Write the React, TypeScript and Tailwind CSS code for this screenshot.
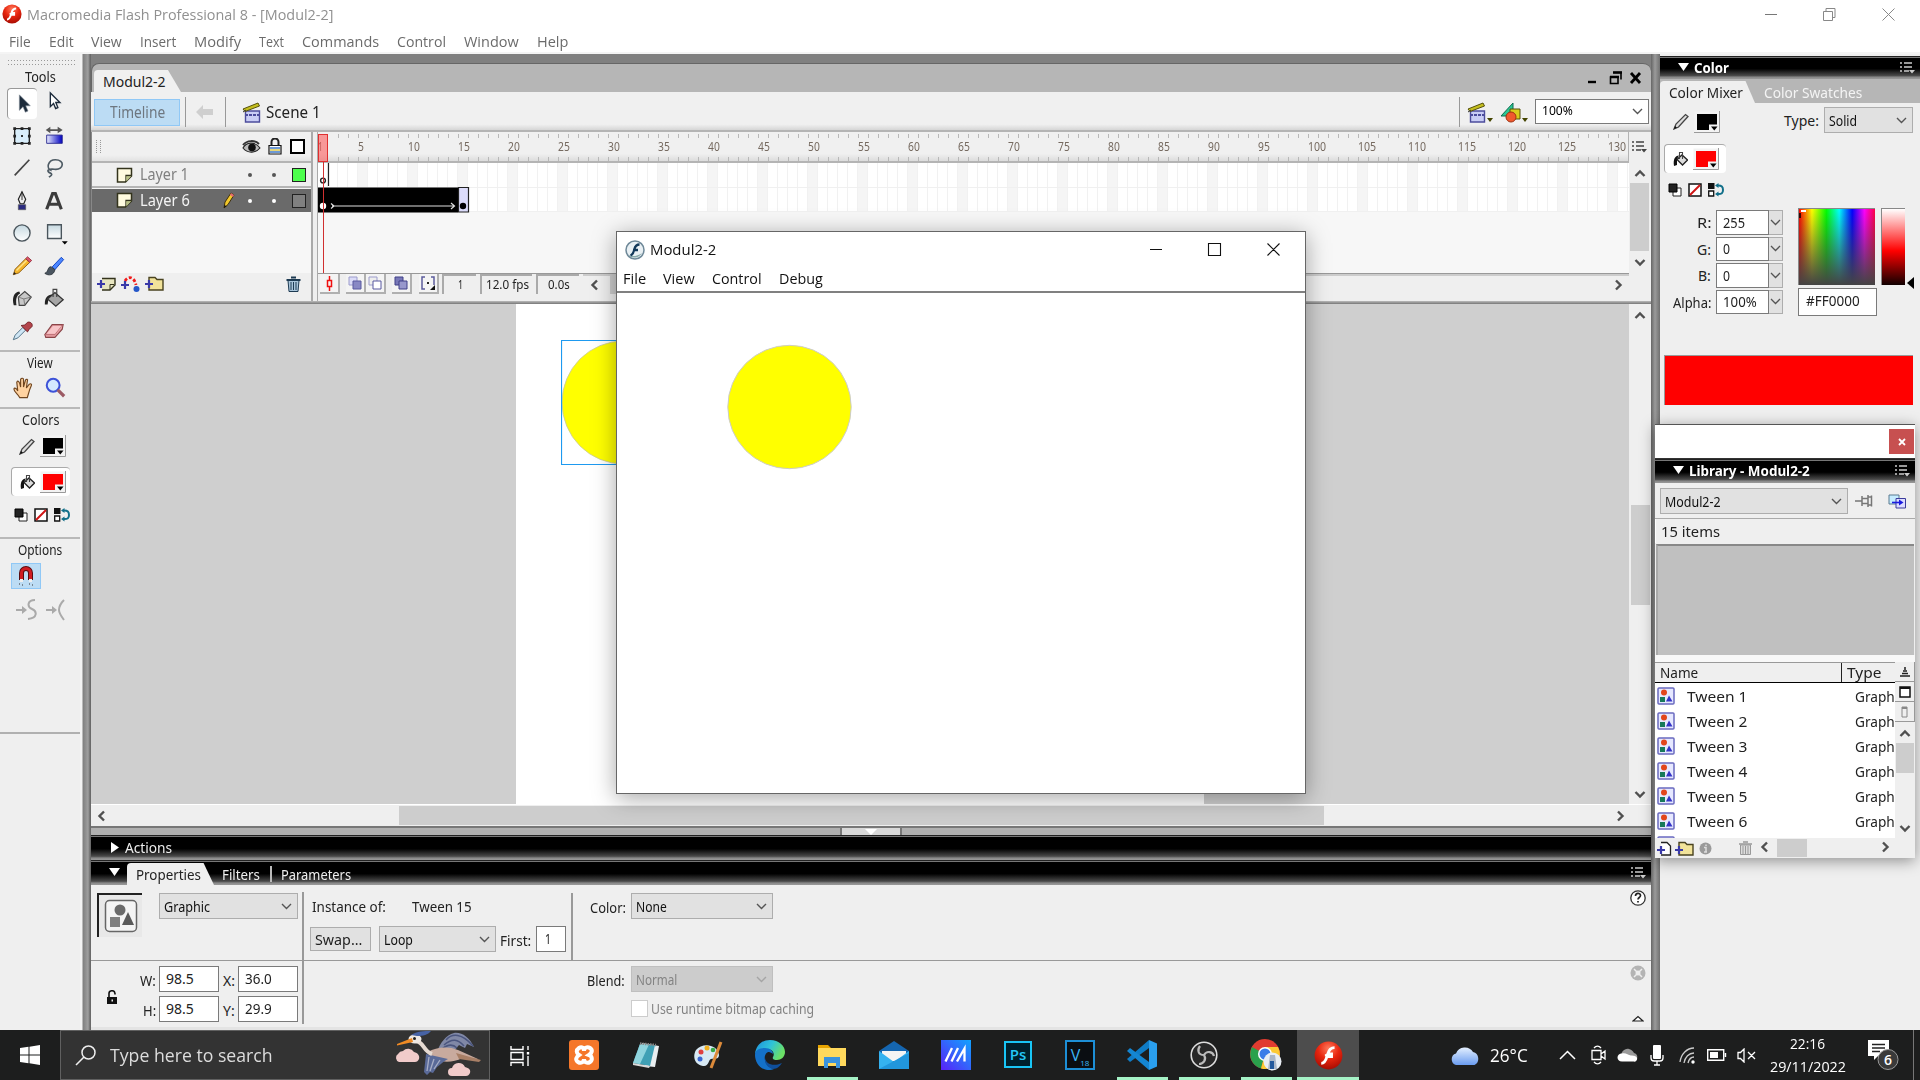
import React, { useLayoutEffect, useRef, useState } from "react";

const tahoma = "font-['Noto_Sans',sans-serif]";
const segoe = "font-['Open_Sans',sans-serif]";

/* One line of text squeezed or stretched to a given width. */
function Fit({ w, className = "", children }: { w: number; className?: string; children: React.ReactNode }) {
  const ref = useRef<HTMLSpanElement>(null);
  const [scale, setScale] = useState(1);
  useLayoutEffect(() => {
    if (ref.current) setScale(w / ref.current.offsetWidth);
  }, [w]);
  return (
    <span className={`block shrink-0 ${className}`} style={{ width: w }}>
      <span ref={ref} className="inline-block origin-left whitespace-nowrap" style={{ transform: `scaleX(${scale})` }}>
        {children}
      </span>
    </span>
  );
}

function Svg({ w, h, vb, className = "", children }: { w: number; h: number; vb?: string; className?: string; children: React.ReactNode }) {
  return (
    <svg width={w} height={h} viewBox={vb ?? `0 0 ${w} ${h}`} fill="none" className={`block shrink-0 ${className}`}>
      {children}
    </svg>
  );
}

function Chevron({ dir, className = "", stroke = "#505050" }: { dir: "up" | "down" | "left" | "right"; className?: string; stroke?: string }) {
  const d = { up: "M1.5 8L6 3.5L10.5 8", down: "M1.5 4L6 8.5L10.5 4", left: "M8 1.5L3.5 6L8 10.5", right: "M4 1.5L8.5 6L4 10.5" }[dir];
  return (
    <Svg w={12} h={12} className={className}>
      <path d={d} stroke={stroke} strokeWidth="2.4" />
    </Svg>
  );
}

function Select({ className, text, tw, disabled = false, white = false }: { className: string; text: string; tw: number; disabled?: boolean; white?: boolean }) {
  const tone = disabled ? "bg-[#cccccc] border-[#bfbfbf] text-[#838383]" : white ? "bg-white border-[#7a7a7a] text-black" : "bg-[#e1e1e1] border-[#adadad] text-[#111]";
  return (
    <div className={`flex shrink-0 items-center justify-between border pr-[5px] pl-[4px] ${tone} ${className}`}>
      <Fit w={tw}>{text}</Fit>
      <Svg w={11} h={7}>
        <path d="M1 1L5.500 5.500L10 1" stroke={disabled ? "#a5a5a5" : "#555"} strokeWidth="1.4" />
      </Svg>
    </div>
  );
}

function Field({ className, text, tw }: { className: string; text: string; tw: number }) {
  return (
    <div className={`flex shrink-0 items-center border border-[#7a7a7a] bg-white pb-[1px] pl-[6px] text-[#222] ${className}`}>
      <Fit w={tw}>{text}</Fit>
    </div>
  );
}

function PanelMenu({ stroke = "#ccc", className = "" }: { stroke?: string; className?: string }) {
  return (
    <Svg w={15} h={13} className={className}>
      <path d="M0 2h2M4 2h8M0 6h2M4 6h8M0 10h2M4 10h5" stroke={stroke} strokeWidth="1.6" />
      <path d="M9 9h6l-3 3.500z" fill={stroke} />
    </Svg>
  );
}

function FlashLogo({ size }: { size: number }) {
  return (
    <Svg w={size} h={size} vb="0 0 24 24">
      <defs>
        <radialGradient id="flashRed" cx="50%" cy="25%" r="75%">
          <stop offset="0" stopColor="#ff7a5c" />
          <stop offset="0.5" stopColor="#e8260f" />
          <stop offset="1" stopColor="#a80c02" />
        </radialGradient>
      </defs>
      <circle cx="12" cy="12" r="11.5" fill="url(#flashRed)" />
      <path d="M17 5.500c-3.500 0-4.700 2-5.600 5.200h3.100v2.200h-3.800c-1 3.500-2.200 5.600-4.700 5.600" stroke="#fff" strokeWidth="2.400" />
      <path d="M9 11.800h6" stroke="#fff" strokeWidth="1.800" />
    </Svg>
  );
}

function TitleBar() {
  return (
    <div className={`flex h-[30px] shrink-0 items-center bg-white pb-[2px] pl-[2px] text-[15px] text-[#909090] ${segoe}`}>
      <FlashLogo size={20} />
      <Fit w={306} className="ml-[5px]">Macromedia Flash Professional 8 - [Modul2-2]</Fit>
      <Svg w={12} h={12} className="ml-[1432px]"><path d="M0 6.500h12" stroke="#777" /></Svg>
      <Svg w={13} h={13} className="ml-[46px]"><path d="M.5 3.500h9v9h-9zM3 3.500v-3h9v9h-2.500" stroke="#888" /></Svg>
      <Svg w={13} h={13} className="ml-[46px]"><path d="M.5.500l12 12M12.500.500l-12 12" stroke="#888" /></Svg>
    </div>
  );
}

const menus: [string, number, number][] = [
  ["File", 22, 9], ["Edit", 25, 18], ["View", 31, 17], ["Insert", 36, 18], ["Modify", 47, 18],
  ["Text", 25, 18], ["Commands", 77, 18], ["Control", 49, 18], ["Window", 55, 18], ["Help", 31, 18],
];

function MenuBar() {
  return (
    <div className={`flex h-[24px] shrink-0 items-center border-b-2 border-[#f4f4f4] bg-white text-[15px] text-[#6b6b6b] ${segoe}`}>
      {menus.map(([m, w, gap]) => (
        <div key={m} className="shrink-0" style={{ marginLeft: gap }}><Fit w={w}>{m}</Fit></div>
      ))}
    </div>
  );
}

/* ---------- Tools ---------- */

const toolIcons: React.ReactNode[] = [
  <path d="M8 2v17l4-4 2.500 6 3-1.300L15 14h5z" fill="#1e2c3c" stroke="#8a95a0" strokeWidth=".6" />,
  <path d="M8 1v15l3.500-3.500 2.300 5.500 2.400-1L14 11.500h4.500z" fill="#fff" stroke="#1e2c3c" strokeWidth="1.500" />,
  <>
    <path d="M4 4h16v16H4z" fill="#d9eefb" stroke="#222" strokeWidth="1.500" />
    <path d="M2.500 2.500h3v3h-3zM10.500 2.500h3v3h-3zM18.500 2.500h3v3h-3zM2.500 10.500h3v3h-3zM18.500 10.500h3v3h-3zM2.500 18.500h3v3h-3zM10.500 18.500h3v3h-3zM18.500 18.500h3v3h-3zM11 11h2v2h-2z" fill="#222" />
  </>,
  <>
    <defs><linearGradient id="gt"><stop offset="0" stopColor="#e8ecff" /><stop offset="1" stopColor="#0000c0" /></linearGradient></defs>
    <path d="M4 11h17v9H4z" fill="url(#gt)" stroke="#2b2b90" />
    <path d="M3 5.500l5-3.500v2.500h8V2L21.500 5.500 16 9V6.500H8V9z" fill="#555" />
  </>,
  <path d="M4 20L20 3" stroke="#444" strokeWidth="1.800" />,
  <path d="M9.500 15c-7-2-4-12 4-12 11 0 9 11 0 10.500-4-.5-6-1-8 1-1 3 4 2.500 4 4.500 0 1.500-2 2-3 3" stroke="#4d5a63" strokeWidth="1.800" />,
  <>
    <path d="M12 2l-4 8 2 5h4l2-5z" fill="#eee" stroke="#222" strokeWidth="1.300" />
    <path d="M12 2v9" stroke="#222" /><path d="M8 16h8v5.500H8z" fill="#2b2b80" stroke="#555" strokeWidth=".7" />
  </>,
  <path d="M4 21L10.500 4h3L20 21M7 15.500h10" stroke="#3c3c3c" strokeWidth="3.400" />,
  <>
    <defs><linearGradient id="ov" x2="0" y2="1"><stop offset="0" stopColor="#c5d8e0" /><stop offset="1" stopColor="#fff" /></linearGradient></defs>
    <circle cx="12" cy="12" r="8.800" fill="url(#ov)" stroke="#4a555c" strokeWidth="1.500" />
  </>,
  <>
    <path d="M5 3h15v15H5z" fill="url(#ov)" stroke="#4a555c" strokeWidth="1.500" />
    <path d="M20.500 21h6.500l-3.200 3.500z" fill="#000" />
  </>,
  <>
    <path d="M2.500 21.500l2-6L16 4l4.500 4L8.500 19.500z" fill="#f5b52a" stroke="#8a5a12" />
    <path d="M16 4l2-2 4.500 4-2 2z" fill="#e0566a" stroke="#93303e" />
    <path d="M2.500 21.500l1-3 2 2z" fill="#222" /><path d="M6 17L17 6" stroke="#fde38b" strokeWidth="1.500" />
  </>,
  <>
    <path d="M10 13L20 2.500l2.500 2.500L13 16z" fill="#4b86ff" stroke="#0a3cc0" />
    <path d="M9 13c-4-1-3 6-7 7 4 3 10 2 11-4z" fill="#4a5560" stroke="#2c333a" />
  </>,
  <>
    <path d="M3 20c-2-8 0-14 6-15l1 2c-4 2-5 6-4 13z" fill="#222" />
    <path d="M8 11l7-6 7 6-7 9H9z" fill="#c8c8c8" stroke="#444" strokeWidth="1.300" /><path d="M8 11l6 2 1 7M14 13l8-2" stroke="#777" />
  </>,
  <>
    <path d="M2 19c0-8 3-10 8-11l-4 5-1 6z" fill="#222" />
    <path d="M5 13l8-7 9 8-8 7z" fill="#a5a5a5" stroke="#333" strokeWidth="1.400" /><path d="M11 11V2.500h4V11" stroke="#444" strokeWidth="1.300" />
  </>,
  <>
    <path d="M2.500 21.500l2-5L13 8l3 3-8.500 8.500z" fill="#cfe6f5" stroke="#4a6b80" />
    <path d="M11 6l7 7 1.500-2.500L23 7c1-3-2-5.500-5-4.500L15 5.500z" fill="#b3454c" stroke="#6d2227" />
  </>,
  <>
    <path d="M2 16L10 5h12l-1 5-8 9H3z" fill="#e9a1a5" stroke="#8a4448" strokeWidth="1.200" />
    <path d="M2 16h11l8-11" stroke="#b86a6e" /><path d="M4 15L11 6.500h9L13 15z" fill="#f7c5c8" />
  </>,
];

function Swatch({ color }: { color: "black" | "red" }) {
  return (
    <Svg w={26} h={22}>
      <path d="M.5.500h25v21H.5z" fill="#f3f3f3" />
      <path d="M25.500 0v21.500H0" stroke="#9a9a9a" />
      <path d="M3 3h20v16H3z" fill={color === "red" ? "#ff0000" : "#000"} />
      <path d="M15 13.500h10v7.500h-10z" fill="#f3f3f3" />
      <path d="M17 15.500h6.500l-3.200 4z" fill="#000" />
    </Svg>
  );
}

function MiniPencil() {
  return (
    <Svg w={16} h={17}>
      <path d="M1 16l2-5L12.500 1.500l2.500 2L5.500 14z" fill="#ddd" stroke="#444" strokeWidth="1.300" />
      <path d="M1 16l1-3 2 1.500z" fill="#111" />
    </Svg>
  );
}

function MiniBucket() {
  return (
    <Svg w={15} h={16}>
      <path d="M1 15C0 8 2 5 6 4.500L4 8v6z" fill="#111" />
      <path d="M4 8.500l5-4.500 5.500 5-5 5z" fill="#ddd" stroke="#222" strokeWidth="1.300" />
      <path d="M6.500 8V1.500h3V8" stroke="#444" strokeWidth="1.100" />
    </Svg>
  );
}

function SwatchActions({ className }: { className: string }) {
  return (
    <div className={`flex items-center ${className}`}>
      <Svg w={14} h={14}><path d="M5 5h8v8H5z" fill="#fff" stroke="#222" /><path d="M1 1h8v8H1z" fill="#222" stroke="#000" /></Svg>
      <Svg w={14} h={14}><path d="M1 1h12v12H1z" fill="#fff" stroke="#111" strokeWidth="1.500" /><path d="M2 12L12 2" stroke="#d01515" strokeWidth="2" /></Svg>
      <Svg w={16} h={14}>
        <path d="M0 0h6.500v6H0z" fill="#111" /><path d="M.7 8h5v5h-5z" fill="#fff" stroke="#111" strokeWidth="1.300" />
        <path d="M9 2.500c5-.5 6 1.500 6 4.500s-1 4.500-6 4" stroke="#12708a" strokeWidth="2" /><path d="M7 2.500L10.500 0v5zM7 11l3.500-2.500v5z" fill="#12708a" />
      </Svg>
    </div>
  );
}

function SectionLabel({ text, w, className }: { text: string; w: number; className: string }) {
  return <div className={`flex h-[20px] items-center justify-center ${className}`}><Fit w={w}>{text}</Fit></div>;
}

function Tools() {
  return (
    <div className={`flex w-[80px] shrink-0 flex-col bg-[#efefef] text-[13.500px] text-[#222] ${tahoma}`}>
      <div className="mt-[6px] ml-[8px] h-[6px] w-[68px] bg-[repeating-linear-gradient(90deg,#999_0_1px,transparent_1px_3px)] [mask-image:linear-gradient(#000_0_1px,transparent_1px_4px,#000_4px_5px,transparent_5px)]" />
      <SectionLabel text="Tools" w={31} className="mt-[1px]" />
      <div className="ml-[6px] grid h-[260px] w-[64px] grid-cols-2 grid-rows-8">
        {toolIcons.map((icon, i) => (
          <div key={i} className={`flex items-center justify-center ${i === 0 ? "m-px rounded border-t border-l border-[#999] bg-white" : ""}`}>
            <Svg w={22} h={22} vb="0 0 24 24" className="overflow-visible">{icon}</Svg>
          </div>
        ))}
      </div>
      <div className="mt-[3px] h-[2px] bg-[#b9b9b9]" />
      <SectionLabel text="View" w={26} className="mt-[1px]" />
      <div className="ml-[7px] grid h-[29px] w-[64px] grid-cols-2 place-items-center">
        <Svg w={23} h={24} vb="0 0 24 24">
          <path d="M8 22c-2-4-6-6-6-9 1-2 3 0 4 2L5 6c1-2 2-1 3 1l1 4V3c1-2 3-1 3 0v8l2-7c1-2 3-1 2 1l-1 7 3-4c2-1 3 0 2 2-2 4-3 9-4 12z" fill="#ffd2a0" stroke="#70451e" strokeWidth="1.200" />
        </Svg>
        <Svg w={22} h={22} vb="0 0 24 24">
          <circle cx="10" cy="9" r="7" fill="#d5eaff" stroke="#3d52d8" strokeWidth="2.200" /><path d="M15 14l7 7" stroke="#9c5a64" strokeWidth="3.500" />
        </Svg>
      </div>
      <div className="mt-[5px] h-[2px] bg-[#b9b9b9]" />
      <SectionLabel text="Colors" w={37} className="mt-[1px]" />
      <div className="mt-[4px] flex h-[24px] items-center gap-[5px] pl-[19px]"><MiniPencil /><Swatch color="black" /></div>
      <div className="mt-[9px] ml-[11px] flex h-[29px] w-[59px] items-center gap-[5px] rounded border-t border-l border-[#aaa] bg-white pl-[8px]"><MiniBucket /><Swatch color="red" /></div>
      <SwatchActions className="mt-[12px] ml-[14px] gap-[6px]" />
      <div className="mt-[15px] h-[2px] bg-[#b9b9b9]" />
      <SectionLabel text="Options" w={44} className="mt-[1px]" />
      <div className="mt-[3px] ml-[11px] flex h-[26px] w-[30px] items-center justify-center border border-[#90c8f6] bg-[#bcdcf4]">
        <Svg w={16} h={20}>
          <path d="M3.500 14V7a4.500 4.500 0 0 1 9 0v7" stroke="#5a0d10" strokeWidth="5" /><path d="M3.500 14V7a4.500 4.500 0 0 1 9 0v7" stroke="#d01c22" strokeWidth="3" />
          <path d="M2 13h3v3H2zM11 13h3v3h-3z" fill="#eee" /><path d="M1 18h1M4 19h1M11 18h1M14 19h1" stroke="#333" />
        </Svg>
      </div>
      <div className="mt-[10px] ml-[16px] flex h-[22px] items-center gap-[9px]">
        <Svg w={21} h={22}><path d="M0 11h7M19 1c-8 0-8 7-3 9s6 9-4 10" stroke="#aaa" strokeWidth="2" /><path d="M6 7l5 4-5 4z" fill="#aaa" /></Svg>
        <Svg w={20} h={22}><path d="M0 11h7M18 1c-4 4-5 7-5 10s2 6 5 10" stroke="#aaa" strokeWidth="2" /><path d="M6 7l5 4-5 4z" fill="#aaa" /></Svg>
      </div>
      <div className="mt-[111px] h-[2px] bg-[#b0b0b0]" />
    </div>
  );
}

/* ---------- Document window ---------- */

function SceneIcon() {
  return (
    <Svg w={20} h={21}>
      <path d="M3.500 9h14v11h-14z" fill="#c9cdf5" stroke="#4c4c9c" strokeWidth="1.400" /><path d="M3 13h15" stroke="#4c4c9c" strokeWidth="2" strokeDasharray="3 1" />
      <path d="M1 7L16 1l1.500 3L3 9.500z" fill="#c5bf1e" stroke="#55510a" /><path d="M1 10l3-2" stroke="#333" />
    </Svg>
  );
}

function DocTabs() {
  return (
    <div className="flex h-[29px] shrink-0 items-end rounded-t-lg border-t border-l border-[#666] bg-[#b6b6b6]">
      <div className="ml-[2px] flex h-[22px] w-[87px] items-center rounded-tl bg-[#f0f0f0] pt-px pl-[9px] text-[14px] text-[#222] [clip-path:polygon(0_0,85%_0,100%_100%,0_100%)]">
        <Fit w={63}>Modul2-2</Fit>
      </div>
      <Svg w={56} h={14} className="mb-[7px] ml-[1406px]">
        <path d="M1 11h8" stroke="#000" strokeWidth="2.400" />
        <path d="M26.500 1.500h7.500v7M23.500 6h7.500v6.500h-7.500z" stroke="#000" strokeWidth="1.600" /><path d="M23 6h9M26 1.500h9" stroke="#000" strokeWidth="2.400" />
        <path d="M44 2l9 10M53 2l-9 10" stroke="#000" strokeWidth="2.800" />
      </Svg>
    </div>
  );
}

function EditBar() {
  return (
    <div className="flex h-[40px] shrink-0 items-center border-b-2 border-[#b4b4b4] bg-[linear-gradient(#f0f0f0_85%,#d6d6d6)] pt-[2px] text-[16px]">
      <div className="ml-[3px] flex h-[27px] w-[86px] items-center border border-[#90c8f6] bg-[#bcdcf4] pl-[15px] text-[#6e7780]"><Fit w={55}>Timeline</Fit></div>
      <div className="ml-[5px] h-[30px] w-px bg-[#999]" />
      <Svg w={17} h={14} className="ml-[10px]"><path d="M0 7l7-7v4h10v6H7v4z" fill="#cfcfcf" /></Svg>
      <div className="ml-[12px] h-[30px] w-px bg-[#999]" />
      <div className="ml-[16px]"><SceneIcon /></div>
      <Fit w={55} className="ml-[4px] text-[#222]">Scene 1</Fit>
      <div className="ml-[1138px] h-[30px] w-px bg-[#999]" />
      <div className="ml-[7px] flex items-end">
        <SceneIcon />
        <Svg w={7} h={5}><path d="M0 0h6l-3 4z" fill="#444400" /></Svg>
        <Svg w={22} h={21} className="ml-[6px]">
          <path d="M1 14L13 1v13z" fill="#2cc795" stroke="#0d6b4f" /><path d="M10 7h10v10H10z" fill="#d8cd1c" stroke="#55510a" /><circle cx="11" cy="15" r="5" fill="#f0592e" stroke="#a03010" />
        </Svg>
        <Svg w={7} h={5}><path d="M0 0h6l-3 4z" fill="#444400" /></Svg>
      </div>
      <Select className="mb-[2px] ml-[6px] h-[25px] w-[114px] pl-[6px] text-[12.500px]" text="100%" tw={31} white />
    </div>
  );
}

function LayerIcon() {
  return <Svg w={18} h={17}><path d="M1.500 1.500h14v7.500l-6 6h-8z" fill="#fffbe0" stroke="#33331c" strokeWidth="1.500" /><path d="M15.500 8.500h-5.500V15" fill="#aab37c" stroke="#33331c" strokeWidth="1.300" /><path d="M15 9.200l-4.800 4.800V9.200z" fill="#b9c088" /></Svg>;
}

function LayerColumn() {
  return (
    <div className="flex w-[220px] shrink-0 flex-col border-l border-[#888] bg-[#f7f7f7] text-[15.500px]">
      <div className="flex h-[31px] items-center border-b-2 border-[#b4b4b4] bg-[linear-gradient(#f0f0f0_80%,#e2e2e2)]">
        <div className="ml-[4px] h-[14px] w-[6px] bg-[repeating-linear-gradient(#999_0_1px,transparent_1px_2px)] [mask-image:linear-gradient(90deg,#000_0_1px,transparent_1px_4px,#000_4px_5px,transparent_5px)]" />
        <Svg w={19} h={14} className="ml-[140px]">
          <path d="M1 8C4 2 13 1 18 8c-4 5-12 6-17 0z" fill="#bbb" stroke="#222" strokeWidth="1.100" /><circle cx="10" cy="7.500" r="3.800" fill="#111" /><path d="M1 5c4-5 12-5 16-1" stroke="#333" strokeWidth="2" />
        </Svg>
        <Svg w={14} h={17} className="ml-[7px]">
          <path d="M3.500 8V4a3.500 3.500 0 0 1 7 0v4" stroke="#222" strokeWidth="2" /><path d="M1 7.500h12v8.500H1z" fill="#fff" stroke="#111" strokeWidth="1.200" /><path d="M2 10h10M2 14h10" stroke="#3e78c8" strokeWidth="1.300" /><path d="M2 12h10" stroke="#d8c030" strokeWidth="1.300" />
        </Svg>
        <div className="ml-[8px] h-[15px] w-[15px] border-[2.500px] border-black bg-white" />
      </div>
      <div className="flex h-[23px] items-center bg-[#efefef] pt-px pl-[24px] text-[#808080]">
        <LayerIcon />
        <Fit w={49} className="ml-[6px]">Layer 1</Fit>
        <div className="ml-[59px] h-[4px] w-[4px] rounded-full bg-[#555]" />
        <div className="ml-[20px] h-[4px] w-[4px] rounded-full bg-[#555]" />
        <div className="ml-[16px] h-[14px] w-[14px] border-[1.500px] border-[#222] bg-[#4dff4d]" />
      </div>
      <div className="h-[3px] bg-[linear-gradient(#b5b5b5_66%,#f4f4f4_66%)]" />
      <div className="flex h-[23px] items-center bg-[#6a6a6a] pl-[24px] text-[#f4f4f4]">
        <LayerIcon />
        <Fit w={50} className="ml-[6px] pt-px">Layer 6</Fit>
        <Svg w={12} h={17} className="ml-[33px]"><path d="M1 16l1-6 6-9 3 2-6 9.500z" fill="#f3c92b" stroke="#40300a" /><path d="M8 1l3 2-1 2-3-2z" fill="#e26a74" /><path d="M1 16l.5-3 2 1.200z" fill="#111" /></Svg>
        <div className="ml-[13px] h-[4px] w-[4px] rounded-full bg-white" />
        <div className="ml-[20px] h-[4px] w-[4px] rounded-full bg-white" />
        <div className="ml-[16px] h-[14px] w-[14px] border-[1.500px] border-[#222] bg-[#808080]" />
      </div>
      <div className="grow" />
      <div className="flex h-[28px] items-start bg-[#efefef] pt-[3px] pl-[4px]">
        <Svg w={20} h={16}><path d="M6 2.500h13V9l-5 5H6" fill="#e8e6c0" stroke="#33331c" strokeWidth="1.400" /><path d="M18 8.500h-4V14" stroke="#33331c" /><path d="M1 8h8M5 4v8" stroke="#3a3aa8" strokeWidth="2.200" /></Svg>
        <Svg w={20} h={16} className="ml-[4px]"><path d="M5 5c3-5 9-5 11 4" stroke="#f01a1a" strokeWidth="2.800" strokeDasharray="3 2" /><path d="M1 9h8M5 5v8" stroke="#3a3aa8" strokeWidth="2.200" /><circle cx="16.500" cy="13" r="3" fill="#2457c9" /></Svg>
        <Svg w={20} h={16} className="ml-[4px]"><path d="M5 3.500V1.500h6l2 2h6V14H5z" fill="#f2e39a" stroke="#4a4320" strokeWidth="1.400" /><path d="M1 8h8M5 4v8" stroke="#3a3aa8" strokeWidth="2.200" /></Svg>
        <Svg w={15} h={16} className="ml-[122px]"><path d="M2 4.500h11L12 15.500H3z" fill="#a9c5da" stroke="#1d3a52" /><path d="M5 6v8M7.500 6v8M10 6v8" stroke="#1d3a52" /><path d="M.5 4h14M5 1.500h5" stroke="#1d3a52" strokeWidth="2" /></Svg>
      </div>
    </div>
  );
}

const frameMarks = Array.from({ length: 26 }, (_, i) => (i + 1) * 5);

function SmallBtn({ className, children }: { className: string; children: React.ReactNode }) {
  return <div className={`flex h-[20px] w-[20px] shrink-0 items-center justify-center border-r-2 border-b-2 border-[#b0b0b0] bg-[#f4f4f4] ${className}`}>{children}</div>;
}

function Frames() {
  return (
    <div className="relative flex w-[1312px] shrink-0 flex-col border-l border-[#aaa] bg-[#f7f7f7]">
      <div className="flex h-[31px] shrink-0 flex-col border-r border-b-2 border-[#b4b4b4] bg-[linear-gradient(#f0f0f0_75%,#dcdcdc)] pt-[2px]">
        <div className="ml-[20px] h-[4px] bg-[repeating-linear-gradient(90deg,#b8b8b8_0_1px,transparent_1px_10px)]" />
        <div className="flex h-[18px] items-center text-[12px] text-[#75695f]">
          <div className="w-[40px] shrink-0"><Fit w={5}>1</Fit></div>
          {frameMarks.map((n) => (
            <div key={n} className={`shrink-0 ${n === 130 ? "w-[19px]" : "w-[50px]"}`}><Fit w={n < 10 ? 6 : n < 100 ? 12 : 18.5}>{n}</Fit></div>
          ))}
        </div>
        <div className="mt-px ml-[20px] h-[4px] bg-[repeating-linear-gradient(90deg,#b8b8b8_0_1px,transparent_1px_10px)]" />
      </div>
      <div className="h-[49px] shrink-0 bg-white bg-[linear-gradient(transparent_24px,#f0f0f0_24px_25px,transparent_25px_48px,#f0f0f0_48px),repeating-linear-gradient(90deg,transparent_0_9px,#f1f1f1_9px_10px),repeating-linear-gradient(90deg,transparent_0_40px,#f5f5f5_40px_50px)]">
        <Svg w={160} h={50} className="overflow-visible">
          <circle cx="5" cy="17.500" r="2.400" fill="#fff" stroke="#222" strokeWidth="1.400" /><path d="M10.500 0v23" stroke="#222" strokeWidth="1.200" />
          <path d="M0 24.500h140v25H0z" fill="#000" /><path d="M140.500 24.500h10v24.500h-10z" fill="#dcdcfa" stroke="#222" strokeWidth="1.200" />
          <circle cx="5" cy="43" r="3.200" fill="#fff" /><circle cx="145" cy="43" r="3.200" fill="#000" />
          <path d="M14 43h122M13 40.500l3 2.500-3 2.500M133 40l3.500 3-3.500 3" stroke="#ddd" strokeWidth="1.200" />
        </Svg>
      </div>
      <div className="grow" />
      <div className="flex h-[28px] shrink-0 items-start border-t border-[#999] bg-[#efefef] text-[12.500px] text-[#222]">
        <SmallBtn className="ml-[2px]"><Svg w={7} h={15}><path d="M3.500 0v4M3.500 11v4M1.500 4.500h4v6h-4z" stroke="#f01010" strokeWidth="1.500" /></Svg></SmallBtn>
        <SmallBtn className="ml-[6px]"><Svg w={14} h={14}><path d="M1 1h8v8H1z" fill="#dcdcf8" stroke="#9c9ccc" /><path d="M5 5h8v8H5z" fill="#8888c4" stroke="#5858a0" /></Svg></SmallBtn>
        <SmallBtn className=""><Svg w={14} h={14}><path d="M1 1h8v8H1z" fill="#eee" stroke="#9c9ccc" /><path d="M5 5h8v8H5z" fill="#fff" stroke="#5858a0" /></Svg></SmallBtn>
        <SmallBtn className="ml-[6px]"><Svg w={14} h={14}><path d="M1 1h8v8H1z" fill="#7878b8" stroke="#404088" /><path d="M5 5h8v8H5z" fill="#9898cc" stroke="#404088" /></Svg></SmallBtn>
        <SmallBtn className="ml-[7px]"><Svg w={14} h={14}><path d="M4 1H1v12h3M10 1h3v8" stroke="#5c5c9c" strokeWidth="1.500" /><path d="M6 6h2v2H6z" fill="#222" /><path d="M14 9v5H9z" fill="#111" /></Svg></SmallBtn>
        <div className="ml-[3px] flex h-[20px] w-[34px] items-center justify-center border-t-2 border-l-2 border-[#aaa]"><Fit w={5}>1</Fit></div>
        <div className="ml-[4px] flex h-[20px] w-[52px] items-center justify-center border-t-2 border-l-2 border-[#aaa]"><Fit w={43}>12.0 fps</Fit></div>
        <div className="ml-[4px] flex h-[20px] w-[43px] items-center justify-center border-t-2 border-l-2 border-[#aaa]"><Fit w={22}>0.0s</Fit></div>
        <div className="ml-[4px] flex h-[20px] grow items-center border-t-2 border-[#ccc]">
          <Chevron dir="left" className="ml-[6px]" />
          <div className="ml-[9px] h-[18px] w-[600px] bg-[#cdcdcd]" />
          <Chevron dir="right" className="mr-[5px] ml-auto" />
        </div>
      </div>
      <div className="absolute top-[2px] left-0 h-[28px] w-[10px] border-[1.500px] border-[#e03030] bg-[#ff5050]/55" />
      <div className="absolute top-[30px] left-[5px] h-[111px] w-px bg-[#d03030]" />
    </div>
  );
}

function Timeline() {
  return (
    <div className="flex h-[169px] shrink-0">
      <LayerColumn />
      <div className="w-[6px] shrink-0 border-l-2 border-[#aaa] bg-[#efefef]" />
      <Frames />
      <div className="flex grow flex-col items-center bg-[#efefef]">
        <PanelMenu stroke="#444" className="mt-[8px] mr-[2px]" />
        <Chevron dir="up" className="mt-[15px] mr-[1px]" />
        <div className="mt-[3px] mr-[1px] h-[68px] w-[19px] bg-[#cdcdcd]" />
        <Chevron dir="down" className="mt-[5px] mr-[1px]" />
      </div>
    </div>
  );
}

function Stage() {
  return (
    <>
      <div className="flex h-[500px] shrink-0">
        <div className="flex w-[1538px] shrink-0 overflow-hidden bg-[#cfcfcf]">
          <div className="ml-[425px] w-[688px] bg-white pt-[36px] pl-[45px]">
            <Svg w={126} h={126}>
              <circle cx="62.500" cy="62.500" r="61.500" fill="#ff0" stroke="#c8c8a0" strokeWidth=".8" /><path d="M.5.500h124.500v124H.5z" stroke="#1e9af0" strokeWidth="1.200" />
            </Svg>
          </div>
        </div>
        <div className="flex grow flex-col items-center bg-[#efefef]">
          <Chevron dir="up" className="mt-[6px]" />
          <div className="mt-[183px] h-[100px] w-[19px] bg-[#cdcdcd]" />
          <Chevron dir="down" className="mt-auto mb-[4px]" />
        </div>
      </div>
      <div className="flex h-[24px] shrink-0 items-center border-t border-b-2 border-t-white border-b-[#777] bg-[#efefef]">
        <Chevron dir="left" className="ml-[5px]" />
        <div className="ml-[291px] h-[19px] w-[925px] bg-[#cdcdcd]" />
        <Chevron dir="right" className="ml-[290px]" />
      </div>
    </>
  );
}

const barTone = "bg-[linear-gradient(#222_0_1px,#777_1px_2px,#000_2px_55%,#4a4a4a_85%,#888_92%,#9a9a9a)]";

function Properties() {
  return (
    <div className="flex h-[142px] shrink-0 bg-[#efefef] text-[14px] text-[#222]">
      <div className="flex w-[211px] shrink-0 flex-col">
        <div className="flex h-[76px] items-start border-b border-[#999] pt-[8px] pl-[6px]">
          <div className="flex h-[44px] w-[45px] items-center justify-center border-t-2 border-l-2 border-[#222] bg-[#e8e8e8]">
            <Svg w={34} h={34}>
              <rect x="1.500" y="1.500" width="31" height="31" rx="4" fill="#f4f4f4" stroke="#666" strokeWidth="1.500" /><circle cx="16" cy="11" r="5.500" fill="#6a6a6a" />
              <path d="M6 18h10v10H6z" fill="#808080" /><path d="M18 26l6-13 6 13z" fill="#5a5a5a" />
            </Svg>
          </div>
          <Select className="ml-[17px] h-[26px] w-[139px]" text="Graphic" tw={46} />
        </div>
        <div className="flex pt-[5px] pl-[15px]">
          <Svg w={12} h={15} className="mt-[24px]"><path d="M3 7V4a3 3 0 0 1 6-.5v1" stroke="#111" strokeWidth="1.600" /><path d="M1 7h10v7H1z" fill="#111" /><path d="M5.500 9.500h1.500v2H5.500z" fill="#eee" /></Svg>
          <div className="ml-[22px] grid grid-cols-[19px_60px_19px_61px] grid-rows-[26px_26px] gap-y-[4px]">
            <Fit w={16} className="self-center pt-[3px]">W:</Fit><Field className="h-[26px] w-[60px]" text="98.5" tw={28} />
            <Fit w={12} className="ml-[4px] self-center pt-[3px]">X:</Fit><Field className="h-[26px] w-[60px]" text="36.0" tw={27} />
            <Fit w={13} className="ml-[3px] self-center pt-[3px]">H:</Fit><Field className="h-[26px] w-[60px]" text="98.5" tw={28} />
            <Fit w={12} className="ml-[4px] self-center pt-[3px]">Y:</Fit><Field className="h-[26px] w-[60px]" text="29.9" tw={27} />
          </div>
        </div>
      </div>
      <div className="mt-[7px] h-[132px] w-[2px] shrink-0 bg-[#999]" />
      <div className="flex grow flex-col">
        <div className="flex h-[76px] shrink-0 border-b border-[#999]">
          <div className="w-[267px] shrink-0 pl-[6px]">
            <div className="flex h-[41px] items-center pt-[2px] pl-[2px]"><Fit w={74}>Instance of:</Fit><Fit w={60} className="ml-[26px]">Tween 15</Fit></div>
            <div className="flex h-[26px] items-center">
              <div className="flex h-[24px] w-[61px] shrink-0 items-center border border-[#adadad] bg-[#e1e1e1] pl-[4px]"><Fit w={47}>Swap...</Fit></div>
              <Select className="ml-[8px] h-[26px] w-[117px]" text="Loop" tw={29} />
              <Fit w={31} className="ml-[4px] pt-[3px]">First:</Fit>
              <Field className="ml-[5px] h-[26px] w-[30px] pl-[8px]" text="1" tw={6} />
            </div>
          </div>
          <div className="mt-[8px] w-[2px] shrink-0 bg-[#999]" />
          <div className="flex items-start pt-[8px] pl-[17px]"><Fit w={36} className="pt-[4px]">Color:</Fit><Select className="ml-[5px] h-[26px] w-[142px]" text="None" tw={31} /></div>
          <div className="mt-[5px] mr-[5px] ml-auto">
            <Svg w={16} h={16}><circle cx="8" cy="8" r="7.200" fill="#fff" stroke="#333" strokeWidth="1.300" /><path d="M5.500 6c0-3.500 5-3.500 5-.500 0 2-2.500 2-2.500 4M8 11v1.500" stroke="#222" strokeWidth="1.700" /></Svg>
          </div>
        </div>
        <div className="flex">
          <div className="pt-[5px] pl-[283px]">
            <div className="flex"><Fit w={38} className="pt-[4px]">Blend:</Fit><Select className="ml-[6px] h-[26px] w-[142px]" text="Normal" tw={41} disabled /></div>
            <div className="mt-[6px] ml-[44px] flex items-center text-[#838383]"><div className="h-[17px] w-[17px] border border-[#ccc] bg-white" /><Fit w={163} className="ml-[3px]">Use runtime bitmap caching</Fit></div>
          </div>
          <div className="mr-[5px] ml-auto flex flex-col items-center gap-[34px] pt-[4px]">
            <Svg w={16} h={16}><circle cx="8" cy="8" r="7.500" fill="#b4b4b4" /><circle cx="8" cy="8" r="2.500" fill="#eee" /><path d="M4 4l8 8M12 4l-8 8" stroke="#eee" strokeWidth="1.500" /></Svg>
            <Svg w={12} h={7}><path d="M1 6l5-4.500L11 6z" fill="#fff" stroke="#222" strokeWidth="1.200" /></Svg>
          </div>
        </div>
      </div>
    </div>
  );
}

function Center() {
  return (
    <div className={`flex w-[1560px] shrink-0 flex-col bg-[#808080] pt-[9px] ${tahoma}`}>
      <DocTabs />
      <EditBar />
      <Timeline />
      <div className="h-[3px] shrink-0 bg-[linear-gradient(#bbb,#777)]" />
      <Stage />
      <div className="flex h-[7px] shrink-0 justify-center bg-[#b0b0b0]">
        <div className="flex w-[62px] justify-center border-x-2 border-x-[#777] bg-[#d8d8d8] pt-px"><Svg w={12} h={6}><path d="M0 0h12L6 6z" fill="#fff" /></Svg></div>
      </div>
      <div className={`flex h-[25px] shrink-0 items-center pl-[20px] text-[14px] text-[#eee] ${barTone}`}>
        <Svg w={8} h={11}><path d="M0 0l8 5.500L0 11z" fill="#fff" /></Svg>
        <Fit w={47} className="ml-[6px]">Actions</Fit>
      </div>
      <div className={`flex h-[25px] shrink-0 items-end pl-[18px] text-[14px] text-[#eee] ${barTone}`}>
        <Svg w={11} h={8} className="mb-[9px]"><path d="M0 0h11L5.500 8z" fill="#fff" /></Svg>
        <div className="ml-[7px] flex h-[22px] w-[87px] items-center rounded-tl bg-[#efefef] pl-[9px] text-[#222] [clip-path:polygon(0_0,88%_0,100%_100%,0_100%)]"><Fit w={65}>Properties</Fit></div>
        <Fit w={38} className="ml-[8px]">Filters</Fit>
        <div className="mb-[3px] ml-[10px] h-[16px] w-[2px] bg-[#bbb]" />
        <Fit w={70} className="ml-[9px]">Parameters</Fit>
        <PanelMenu className="mr-[5px] mb-[6px] ml-auto" />
      </div>
      <Properties />
      <div className="h-[3px] bg-[#e4e4e4]" />
    </div>
  );
}

/* ---------- Color panel ---------- */

const channels: [string, string, number, number][] = [["R:", "255", 14, 22], ["G:", "0", 14, 7], ["B:", "0", 13, 7], ["Alpha:", "100%", 38, 34]];

function ColorPanel() {
  return (
    <div className={`flex w-[260px] shrink-0 flex-col bg-[#efefef] text-[14px] text-[#222] ${tahoma}`}>
      <div className={`mt-[2px] flex h-[23px] shrink-0 items-center pl-[18px] font-bold text-white ${barTone}`}>
        <Svg w={11} h={8} className="mb-[2px]"><path d="M0 0h11L5.500 8z" fill="#fff" /></Svg>
        <Fit w={35} className="mb-px ml-[5px]">Color</Fit>
        <PanelMenu className="mr-[5px] mb-px ml-auto" />
      </div>
      <div className="flex h-[24px] shrink-0 items-end bg-[#b6b6b6]">
        <div className="flex h-[22px] w-[95px] items-center rounded-tl bg-[#efefef] pt-px pl-[9px] [clip-path:polygon(0_0,90%_0,100%_100%,0_100%)]"><Fit w={74}>Color Mixer</Fit></div>
        <Fit w={98} className="ml-[9px] text-[#f4f4f4]">Color Swatches</Fit>
      </div>
      <div className="flex h-[33px] shrink-0 items-start pt-[4px] pl-[13px]">
        <div className="pt-[6px]"><MiniPencil /></div>
        <div className="mt-[4px] ml-[5px]"><Swatch color="black" /></div>
        <Fit w={35} className="ml-[64px] pt-[3px]">Type:</Fit>
        <Select className="ml-[5px] h-[26px] w-[89px]" text="Solid" tw={28} />
      </div>
      <div className="mt-[8px] ml-[4px] flex h-[29px] w-[62px] shrink-0 items-center gap-[5px] rounded border-t border-l border-[#aaa] bg-white pl-[8px]"><MiniBucket /><Swatch color="red" /></div>
      <SwatchActions className="mt-[10px] ml-[8px] gap-[6px]" />
      <div className="mt-[13px] flex shrink-0">
        <div className="flex w-[123px] shrink-0 flex-col gap-[2px]">
          {channels.map(([label, value, lw, vw]) => (
            <div key={label} className="flex h-[24.500px] items-stretch justify-end">
              <Fit w={lw} className="mr-[5px] self-center pt-px">{label}</Fit>
              <div className="flex w-[53px] shrink-0 items-center border border-[#7a7a7a] bg-white pl-[6px]"><Fit w={vw}>{value}</Fit></div>
              <div className="flex w-[14px] shrink-0 items-center justify-center border border-l-0 border-[#adadad] bg-[#e1e1e1]"><Svg w={11} h={7}><path d="M1 1l4.500 4.500L10 1" stroke="#555" strokeWidth="1.300" /></Svg></div>
            </div>
          ))}
        </div>
        <div className="-mt-[2px] ml-[15px] flex flex-col">
          <div className="flex">
            <div className="h-[77px] w-[77px] border-t border-l border-[#888] bg-[linear-gradient(transparent,#444),linear-gradient(90deg,#f00,#ff0_17%,#0f0_36%,#0ff_53%,#00f_70%,#f0f_86%,#f04)]">
              <Svg w={10} h={10}><path d="M2 2h5" stroke="#fff" strokeWidth="2" /><path d="M1 4v5" stroke="#000" strokeWidth="1.500" /></Svg>
            </div>
            <div className="ml-[6px] h-[77px] w-[24px] border-t border-l border-[#888] bg-[linear-gradient(#fff,#f00_55%,#100)]" />
            <Svg w={8} h={13} className="mt-auto -mb-[5px] ml-[2px]"><path d="M7 0v12L0 6z" fill="#000" /></Svg>
          </div>
          <Field className="mt-[3px] h-[28px] w-[79px] pb-[3px] pl-[7px]" text="#FF0000" tw={54} />
        </div>
      </div>
      <div className="mt-[39px] ml-[4px] h-[50px] w-[249px] shrink-0 border-t border-l border-[#999] bg-[#ff0000]" />
    </div>
  );
}

/* ---------- Floating windows ---------- */

function PlayerWindow() {
  return (
    <div className={`absolute top-[231px] left-[616px] flex h-[563px] w-[690px] flex-col border border-[#666] bg-white text-[14px] text-[#111] shadow-[0_4px_22px_rgba(0,0,0,0.35)] ${segoe}`}>
      <div className="flex h-[35px] shrink-0 items-center pl-[8px]">
        <Svg w={20} h={20}><circle cx="10" cy="10" r="9" fill="#e9f0f4" stroke="#6e8898" strokeWidth="1.500" /><path d="M3 15a9 9 0 0 0 14-2c-4 3-9 4-14 2z" fill="#8aa" /><path d="M14.500 4.500c-3 0-4.500 2-5.200 5-.7 3-1.500 5-3.800 6M8 10h5" stroke="#12395a" strokeWidth="2.300" /></Svg>
        <Fit w={66} className="ml-[5px]">Modul2-2</Fit>
        <Svg w={130} h={13} className="ml-[434px]"><path d="M0 6.500h12M58.500.500h12v12h-12zM117.500.500l12 12M129.500.500l-12 12" stroke="#111" strokeWidth="1.100" /></Svg>
      </div>
      <div className="flex h-[26px] shrink-0 items-center border-b-2 border-[#808080] pb-[2px]">
        <Fit w={23} className="ml-[6px]">File</Fit><Fit w={32} className="ml-[17px]">View</Fit><Fit w={50} className="ml-[17px]">Control</Fit><Fit w={44} className="ml-[17px]">Debug</Fit>
      </div>
      <Svg w={126} h={126} className="mt-[51px] ml-[110px]"><circle cx="62.500" cy="63" r="61.700" fill="#ff0" stroke="#ccc" /></Svg>
    </div>
  );
}

const symbols = ["Tween 1", "Tween 2", "Tween 3", "Tween 4", "Tween 5", "Tween 6"];

function SymbolIcon() {
  return (
    <Svg w={18} h={18}><rect x="1" y="1" width="16" height="16" rx="1" fill="#e6e8ff" stroke="#6a6ac0" strokeWidth="1.500" /><circle cx="7" cy="5.500" r="3" fill="#e2461c" /><path d="M3 10h5v5H3z" fill="#17795a" /><path d="M9 14.500l3-6 3.500 6z" fill="#3434c8" /></Svg>
  );
}

function LibraryWindow() {
  return (
    <div className={`absolute top-[424px] left-[1655px] flex h-[434px] w-[260px] flex-col border-t border-[#555] bg-[#efefef] text-[14px] text-[#222] shadow-[0_3px_14px_rgba(0,0,0,0.4)] ${tahoma}`}>
      <div className="flex h-[34px] shrink-0 items-center justify-end border-b border-[#333] bg-white pr-[1px]">
        <div className="flex h-[25px] w-[25px] items-center justify-center bg-[#c75050]"><Svg w={8} h={8}><path d="M1 1l6 6M7 1L1 7" stroke="#fff" strokeWidth="1.800" /></Svg></div>
      </div>
      <div className={`flex h-[24px] shrink-0 items-center pl-[18px] font-bold text-white ${barTone}`}>
        <Svg w={11} h={8} className="mb-[2px]"><path d="M0 0h11L5.500 8z" fill="#fff" /></Svg>
        <Fit w={121} className="mb-px ml-[5px]">Library - Modul2-2</Fit>
        <PanelMenu className="mr-[5px] mb-px ml-auto" />
      </div>
      <div className="flex h-[36px] shrink-0 items-center border-b border-[#aaa] pt-px pl-[5px]">
        <Select className="h-[26px] w-[188px]" text="Modul2-2" tw={56} />
        <Svg w={18} h={14} className="ml-[7px]"><path d="M0 7h7M7 2v10M7 4.500h6M7 9.500h6M13 1v12M16.500 1.500v11M13 3h3M13 11h3" stroke="#777" strokeWidth="1.500" /></Svg>
        <Svg w={19} h={15} className="ml-[15px]"><path d="M1 1h10v9H1z" fill="#c5ecff" stroke="#5a7a90" /><path d="M8 4.500h9.500V14H8z" fill="#dcdcff" stroke="#3c3c9c" /><path d="M4 8.500h8" stroke="#1a1ae0" strokeWidth="1.600" /><path d="M11 5.500l4.500 3-4.500 3z" fill="#1a1ae0" /></Svg>
      </div>
      <div className="flex h-[24px] shrink-0 items-center border-l border-white pt-px pl-[5px] text-[15px]"><Fit w={59}>15 items</Fit></div>
      <div className="mx-[1px] mt-[1px] h-[111px] shrink-0 border-t-2 border-l-2 border-t-[#888] border-l-[#aaa] bg-[#c0c0c0]" />
      <div className="h-[7px] shrink-0 bg-[#f8f8f8]" />
      <div className="flex h-[176px] shrink-0 text-[15px]">
        <div className="flex w-[240px] shrink-0 flex-col overflow-hidden bg-white">
          <div className="flex h-[21px] shrink-0 items-center border-t border-b border-t-[#999] border-b-black bg-[#efefef]">
            <Fit w={38} className="ml-[5px]">Name</Fit>
            <div className="ml-[143px] h-full w-px bg-[#222]" />
            <Fit w={34} className="ml-[5px]">Type</Fit>
          </div>
          {symbols.map((s) => (
            <div key={s} className="flex h-[25px] shrink-0 items-center pl-[2px]">
              <SymbolIcon /><Fit w={61} className="ml-[12px] pt-[2px]">{s}</Fit><Fit w={40} className="ml-[107px] pt-[2px]">Graph</Fit>
            </div>
          ))}
          <div className="mt-[3px] ml-[2px] shrink-0"><SymbolIcon /></div>
        </div>
        <div className="flex grow flex-col items-center">
          <div className="flex h-[20px] w-full items-center justify-center border-r border-b border-[#999]"><Svg w={10} h={10}><path d="M5 0v3M3 4h4M2 6.500h6M0 9h10" stroke="#222" strokeWidth="1.500" /></Svg></div>
          <div className="flex h-[20px] w-full items-center justify-center border-r border-b border-[#999]"><Svg w={12} h={12}><path d="M1 1h10v10H1z" fill="#fff" stroke="#111" strokeWidth="1.500" /><path d="M1 2h10" stroke="#111" strokeWidth="2" /></Svg></div>
          <div className="flex h-[20px] w-full items-center justify-center border-r border-b border-[#999]"><Svg w={7} h={12}><path d="M1 1h5v10H1z" stroke="#888" /><path d="M1 2h5" stroke="#888" strokeWidth="2" /></Svg></div>
          <Chevron dir="up" className="mt-[6px]" />
          <div className="mt-[3px] h-[30px] w-[18px] bg-[#cdcdcd]" />
          <Chevron dir="down" className="mt-auto mb-[4px]" />
        </div>
      </div>
      <div className="flex grow items-center pl-[2px]">
        <Svg w={15} h={15}><path d="M4 1.500h6l3.500 3.500v9H4" fill="#fff" stroke="#222" strokeWidth="1.300" /><path d="M0 9h8M4 5v8" stroke="#3a3aa8" strokeWidth="2.200" /></Svg>
        <Svg w={19} h={15} className="ml-[3px]"><path d="M4 3.500V1.500h6l2 2h6V14H4z" fill="#f2e39a" stroke="#4a4320" strokeWidth="1.400" /><path d="M0 9h8M4 5v8" stroke="#3a3aa8" strokeWidth="2.200" /></Svg>
        <Svg w={13} h={13} className="ml-[5px]"><circle cx="6.500" cy="6.500" r="6" fill="#9a9a9a" /><path d="M7 2.500v1.500M5 5.500h2V10M5 10h3" stroke="#ddd" strokeWidth="1.500" /></Svg>
        <Svg w={13} h={14} className="ml-[27px]"><path d="M1.500 4h10v9.500h-10z" fill="#ddd" stroke="#999" /><path d="M4 5v8M6.500 5v8M9 5v8" stroke="#999" /><path d="M0 3h13M4 1h5" stroke="#999" strokeWidth="1.500" /></Svg>
        <Chevron dir="left" className="mb-[2px] ml-[7px]" />
        <div className="ml-[6px] h-[18px] w-[30px] bg-[#cdcdcd]" />
        <Chevron dir="right" className="mb-[2px] ml-[72px]" />
      </div>
    </div>
  );
}

/* ---------- Taskbar ---------- */

function Heron() {
  return (
    <Svg w={90} h={48}>
      <path d="M43 21C46 12 52 4 60 2c8-1 15 4 20 14l-7-3-2 4-6-3-6 7z" fill="#8088a6" />
      <path d="M52 9C58 2 68 2 79 15M50 14c8-7 14-6 20 1M48 18c6-5 11-5 15-1" stroke="#4a557e" strokeWidth="1.500" />
      <path d="M34 21c8-5 20-6 30-2l20 9-16-1c-10 6-26 4-32-1z" fill="#c8aa9e" />
      <path d="M62 22l25 7-2 2-20-3z" fill="#a87f66" />
      <path d="M32 23l22 5c-5 3-7 5-11 8l-4 6-3-1-3 3-3-3z" fill="#5a6a98" />
      <path d="M35 26l-2 14M40 28l-4 12M46 29l-6 9" stroke="#a7aec6" strokeWidth="1.300" />
      <path d="M22 10c8 1 7 10 16 13" stroke="#e6dad2" strokeWidth="4" />
      <ellipse cx="21" cy="8" rx="6.500" ry="4.500" fill="#efe9e4" />
      <path d="M18 7L3 13v1.500L19 11z" fill="#f08a24" />
      <path d="M17 4C23 0 30 0 37 0c-3 4-8 5-14 5z" fill="#4763a5" /><circle cx="20.500" cy="7.500" r="1.500" fill="#222" />
      <path d="M5 31a4.500 4.500 0 0 1-1-8 6 6 0 0 1 5-3 7 7 0 0 1 11 1c4 1 6 4 5 7-1 2-2 3-4 3z" fill="#f1cbca" />
      <path d="M58 45a4 4 0 0 1 0-8 7 7 0 0 1 13-1c4 1 6 3 5 6-1 2-2 3-4 3z" fill="#f1cbca" />
    </Svg>
  );
}

const apps: { run?: boolean; active?: boolean; icon: React.ReactNode }[] = [
  { icon: <Svg w={30} h={30}><rect width="30" height="30" rx="3" fill="#f5772a" /><path d="M10 8c3-2 5 0 5 3 0-3 3-5 6-3s2 5-1 7c3 1 4 5 1 7s-6 0-6-3c0 3-3 5-6 3s-2-5 1-7c-3-2-3-5 0-7z" stroke="#fff" strokeWidth="4" /></Svg> },
  { icon: <Svg w={28} h={28}><path d="M10 2l17 3-4 21-10-1z" fill="#e9eef0" /><path d="M8 3l15 1-5 21L1 22z" fill="#3fa0b5" /><path d="M8 3l9 .6L8 23l-7-1z" fill="#8fd4de" /><path d="M8 2.500l16 1.500" stroke="#888" strokeWidth="2.500" strokeDasharray="1.500 1" /><path d="M1 22l17 3-1 2-16-3z" fill="#d9d9d9" /></Svg> },
  { icon: <Svg w={30} h={30}><path d="M3 10C9 2 25 4 26 15c0 5-5 3-8 4s-2 8-8 7C2 25-1 17 3 10z" fill="#d7e9f4" /><circle cx="8" cy="12" r="2.500" fill="#e04040" /><circle cx="14" cy="8" r="2.500" fill="#f0b020" /><circle cx="20" cy="10" r="2.300" fill="#35a845" /><circle cx="7" cy="19" r="2.500" fill="#3a66d0" /><path d="M28 2L18 28" stroke="#dc8a3a" strokeWidth="3" /></Svg> },
  { icon: <Svg w={30} h={30}><defs><linearGradient id="ed" x2="1" y2=".4"><stop offset="0" stopColor="#1c8fe0" /><stop offset=".55" stopColor="#2fc3d8" /><stop offset="1" stopColor="#6be066" /></linearGradient></defs><path d="M0 14C1 5 7 0 15 0c9 0 15 6 15 12 0 5-4 8-8 8-3 0-5-1-4-3 2-3 0-8-6-8C6 9 1 11 0 14z" fill="url(#ed)" /><path d="M0 15c0-5 5-7 10-7 5 0 8 3 8 6-1-1-3-2-4-2-3 0-5 4-4 8 1 5 5 8 9 9-10 4-19-4-19-14z" fill="#1471c9" /><path d="M10 18c1 6 8 9 17 5-2 3-5 6-9 6-5-1-9-6-8-11z" fill="#0f4f9c" /></Svg> },
  { run: true, icon: <Svg w={28} h={25}><path d="M0 2h10l3 3v6H0z" fill="#e8a400" /><path d="M0 5h28v18H0z" fill="#ffd95c" /><path d="M6 14h16v11h-4v-5h-8v5H6z" fill="#3b93dc" /></Svg> },
  { icon: <Svg w={30} h={28}><path d="M0 10L15 0l15 10v18H0z" fill="#1566b0" /><path d="M3 10h24v10H3z" fill="#f4f4f4" /><path d="M0 10l15 11L30 10v18H0z" fill="#35b2f0" /><path d="M0 28L30 12v16z" fill="#2196dc" /></Svg> },
  { icon: <Svg w={30} h={30}><defs><linearGradient id="ma" x1="0" y1="1" x2="1" y2="0"><stop offset="0" stopColor="#5a20f8" /><stop offset="1" stopColor="#10a4ff" /></linearGradient></defs><path d="M0 0h30v30H0z" fill="url(#ma)" /><path d="M4.500 21.500L11 8M10.500 21.500L17 8M16 21.500l7.500-13v13" stroke="#fff" strokeWidth="2.300" /></Svg> },
  { icon: <div className="mb-[2px] flex h-[27px] w-[28px] items-center justify-center border-2 border-[#19c5f5] bg-[#00202c] text-[15px] leading-none font-semibold text-[#24c6f7]">Ps</div> },
  { icon: <div className="flex h-[30px] w-[30px] items-center justify-center border-2 border-[#1d8fd6] bg-[#0a0e12] text-[16px] leading-none text-[#3cb6f4]">V<span className="mt-[16px] text-[8px]">18</span></div> },
  { run: true, icon: <Svg w={30} h={30}><path d="M22 0l8 3.500v23L22 30z" fill="#2a9fee" /><path d="M22 0v8L3 22l-3-3z" fill="#0f7cc6" /><path d="M22 30v-8L3 8l-3 3z" fill="#1486d2" /></Svg> },
  { run: true, icon: <Svg w={28} h={28}><circle cx="14" cy="14" r="12.800" fill="#282828" stroke="#ddd" strokeWidth="1.600" /><path d="M14 14c-6 0-7-5-4-9M14 14c3-5 9-3 10 1M14 14c3 5-1 9-5 9" stroke="#bbb" strokeWidth="2.200" /></Svg> },
  { run: true, icon: <Svg w={32} h={32}><circle cx="15" cy="15" r="15" fill="#e13c30" /><path d="M15 15L2 8a15 15 0 0 0 9 21.500z" fill="#2aa14c" /><path d="M15 15l-4 14.500A15 15 0 0 0 28 8H15z" fill="#fcc934" /><circle cx="15" cy="15" r="7" fill="#fff" /><circle cx="15" cy="15" r="5.500" fill="#3b7de8" /><circle cx="22.500" cy="22.500" r="9" fill="#e9eef4" /><path d="M20 16h5l2 14h-9z" fill="#a9b6c8" /><path d="M20 22h4v8h-4z" fill="#22589c" /></Svg> },
  { run: true, active: true, icon: <FlashLogo size={29} /> },
];

function Taskbar() {
  return (
    <div className={`flex h-[50px] shrink-0 bg-[#1d1e1e] text-white ${segoe}`}>
      <div className="flex w-[60px] shrink-0 items-center justify-center"><Svg w={20} h={20}><path d="M0 3l8.500-1.200v7.700H0zM9.500 1.700L20 0v9.500H9.500zM0 10.500h8.500v7.700L0 17zM9.500 10.500H20V20L9.500 18.300z" fill="#fff" /></Svg></div>
      <div className="flex w-[430px] shrink-0 items-center border border-[#606060] bg-[#333] pl-[14px] text-[18px] text-[#dcdcdc]">
        <Svg w={21} h={21}><circle cx="13.500" cy="7.500" r="6.500" stroke="#eee" strokeWidth="1.500" /><path d="M9 12L1 20" stroke="#eee" strokeWidth="1.600" /></Svg>
        <Fit w={163} className="ml-[14px]">Type here to search</Fit>
        <div className="ml-[121px]"><Heron /></div>
      </div>
      <div className="flex w-[63px] shrink-0 items-center pt-px pl-[20px]">
        <Svg w={20} h={20}><path d="M1 0v3.500h12V0M1 20v-3.500h12V20M1 6.500h12v7H1zM18 0v4M18 10v10" stroke="#fff" strokeWidth="1.400" /><path d="M16.800 6h2.400v2.500h-2.400z" fill="#fff" /></Svg>
      </div>
      {apps.map((a, i) => (
        <div key={i} className={`flex w-[62px] shrink-0 flex-col items-center ${a.active ? "bg-[#4d4d4d]" : ""}`}>
          <div className="flex h-[47px] items-center pt-[3px]">{a.icon}</div>
          {a.run && <div className={`h-[3px] bg-[#a5f2c6] ${a.active ? "w-full" : "w-[51px]"}`} />}
        </div>
      ))}
      <div className="ml-[91px] flex shrink-0 items-center">
        <Svg w={31} h={21}><defs><linearGradient id="cl" x2="0" y2="1"><stop offset="0" stopColor="#e4f0ff" /><stop offset="1" stopColor="#6a9cf0" /></linearGradient></defs><path d="M6 20a6 6 0 0 1 0-11.500A9.500 9.500 0 0 1 23 7a7 7 0 0 1 1.500 13z" fill="url(#cl)" /></Svg>
        <Fit w={38} className="ml-[9px] text-[18px]">26°C</Fit>
        <Svg w={17} h={10} className="ml-[31px]"><path d="M1 9l7.500-7.500L16 9" stroke="#fff" strokeWidth="1.500" /></Svg>
        <Svg w={16} h={20} className="ml-[15px]"><path d="M1 5.500h9v9H1zM10 9l4-3v8l-4-3M3 3c2-2.500 5-2.500 7 0M3 17c2 2.500 5 2.500 7 0" stroke="#fff" strokeWidth="1.300" /></Svg>
        <Svg w={21} h={14} className="ml-[10px]"><path d="M4 10C3 4 8 0 12 1c3 1 4 2 5 4 4 1 4 5 2 7z" fill="#9a9a9a" /><path d="M5 13.500c-6 0-6-8 0-8 4-1 6 2 9 2s7 1 6 4-3 2-4 2z" fill="#fff" /></Svg>
        <Svg w={14} h={21} className="ml-[12px]"><rect x="3" width="8" height="14" rx="1" fill="#fff" /><path d="M1 10v3c0 2 1 3 3 3h6c2 0 3-1 3-3v-3M7 16v4M4 20h6" stroke="#fff" strokeWidth="1.300" /></Svg>
        <Svg w={17} h={17} className="ml-[15px]"><path d="M1 15C2 7 8 1 15 1M5 16c1-6 5-10 10-10M9 16c1-4 3-6 6-6" stroke="#ccc" strokeWidth="1.300" /><circle cx="14" cy="15" r="1.700" fill="#fff" /></Svg>
        <Svg w={20} h={12} className="ml-[11px]"><path d="M.7.700h16v10.500h-16zM18.500 4v4" stroke="#fff" strokeWidth="1.400" /><path d="M3 3h8v6H3z" fill="#fff" /></Svg>
        <Svg w={19} h={15} className="ml-[10px]"><path d="M1 4.500h2.500L7 1v13l-3.500-3.500H1zM11 4l7 7M18 4l-7 7" stroke="#fff" strokeWidth="1.300" /></Svg>
        <div className="ml-[12px] flex w-[79px] flex-col items-center text-[14.500px] leading-[23px]"><Fit w={35}>22:16</Fit><Fit w={76}>29/11/2022</Fit></div>
        <Svg w={32} h={32} className="ml-[21px]"><path d="M0 1h21v16H10l-4 4v-4H0z" fill="#fff" /><path d="M4 5.500h13M4 9h13M4 12.500h8" stroke="#222" strokeWidth="1.300" /><circle cx="20" cy="20.500" r="10" fill="#3a3a3a" stroke="#999" /><text x="20" y="25.500" textAnchor="middle" fontSize="14" fontWeight="600" fill="#fff">6</text></Svg>
        <div className="ml-[13px] h-[50px] w-px bg-[#777]" />
      </div>
    </div>
  );
}

export default function App() {
  return (
    <div className="relative flex h-[1080px] w-[1920px] flex-col overflow-hidden bg-[#efefef]">
      <TitleBar />
      <MenuBar />
      <div className="flex h-[976px] shrink-0">
        <Tools />
        <div className="w-[11px] shrink-0 bg-[linear-gradient(90deg,#f4f4f4_0_2px,#808080_3px,#a0a0a0_8px,#6e6e6e_10px,#666)]" />
        <Center />
        <div className="w-[9px] shrink-0 bg-[linear-gradient(90deg,#666,#9a9a9a_4px,#707070)]" />
        <ColorPanel />
      </div>
      <Taskbar />
      <PlayerWindow />
      <LibraryWindow />
    </div>
  );
}
